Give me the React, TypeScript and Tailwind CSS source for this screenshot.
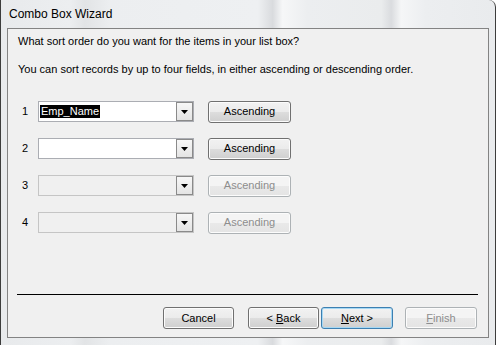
import React from 'react'

const font = { fontFamily: '"Liberation Sans", Arial, sans-serif' }

function Combo({ value, disabled }: { value?: string; disabled?: boolean }) {
  return (
    <div
      className={`w-[156px] h-[21px] flex items-center border ${
        disabled ? 'border-[#c5c5c5] bg-[#f0f0f0]' : 'border-[#abadb3] bg-white'
      }`}
    >
      <div className="flex-1 pl-[1px] flex items-center">
        {value && <span className="bg-black text-white leading-[13px] px-[1px]">{value}</span>}
      </div>
      {/* dropdown arrow button */}
      <div className="w-[17px] h-[19px] border border-[#8a8a8a] bg-[linear-gradient(#f7f7f7,#e4e4e4)] flex items-center justify-center">
        <svg width="7" height="4" viewBox="0 0 7 4">
          <path d="M0 0h7L3.5 4z" fill="#000" />
        </svg>
      </div>
    </div>
  )
}

function WinButton({
  children,
  disabled,
  primary,
  className = '',
}: {
  children: React.ReactNode
  disabled?: boolean
  primary?: boolean
  className?: string
}) {
  const border = disabled ? 'border-[#adb2b5]' : primary ? 'border-[#3c7fb1]' : 'border-[#707070]'
  const bg = disabled
    ? 'bg-[linear-gradient(#f4f4f4,#f4f4f4_50%,#e9e9e9_50%,#e4e4e4)]'
    : 'bg-[linear-gradient(#f2f2f2,#ebebeb_50%,#dddddd_50%,#cfcfcf)]'
  return (
    <div
      className={`h-[22px] rounded-[3px] border ${border} ${bg} flex items-center justify-center text-[11px] ${
        disabled ? 'text-[#8d8d8d]' : 'text-black'
      } ${primary ? 'shadow-[inset_0_0_0_1px_#a6d8f4]' : 'shadow-[inset_0_0_0_1px_#fcfcfc]'} ${className}`}
    >
      {children}
    </div>
  )
}

function SortRow({ n, value, disabled }: { n: number; value?: string; disabled?: boolean }) {
  return (
    <div className="h-[23px] flex items-center">
      <span className="w-[19px] pl-[3px] text-[11px] text-black">{n}</span>
      <Combo value={value} disabled={disabled} />
      <WinButton disabled={disabled} className="ml-[14px] w-[83px]">
        Ascending
      </WinButton>
    </div>
  )
}

export default function App() {
  return (
    <div
      className="w-[496px] h-[345px] overflow-hidden bg-white text-[11px] leading-[13px]"
      style={font}
    >
      {/* window frame (aero glass) */}
      <div className="w-[496px] h-[345px] rounded-tr-[7px] border-l border-r border-[#3c3c3c] bg-[linear-gradient(90deg,#e8eaec_0%,#eceef0_14%,#e2e4e6_17%,#eceef0_22%,#eef0f2_52%,#d9dbde_55%,#f6f7f8_57%,#eceef0_62%,#eaeced_77%,#dadcdf_79%,#f5f6f7_81%,#eceef0_86%,#e9ebed_100%)] flex flex-col pl-[6px] pr-[6px]">
        <div className="h-[28px] flex items-center pl-[2px] text-[12px] text-black">Combo Box Wizard</div>

        {/* client area */}
        <div className="w-[482px] h-[310px] border border-[#838383] bg-[#f0f0f0] flex flex-col">
          <div className="pl-[10px] pt-[6px]">What sort order do you want for the items in your list box?</div>
          <div className="pl-[10px] mt-[15px]">
            You can sort records by up to four fields, in either ascending or descending order.
          </div>

          <div className="mt-[24px] pl-[11px] flex flex-col gap-[14px]">
            <SortRow n={1} value="Emp_Name" />
            <SortRow n={2} />
            <SortRow n={3} disabled />
            <SortRow n={4} disabled />
          </div>

          <div className="mt-[60px] ml-[9px] mr-[10px] h-[1px] bg-black" />

          <div className="mt-[12px] flex items-center justify-end pr-[11px]">
            <WinButton className="w-[71px]">Cancel</WinButton>
            <WinButton className="w-[71px] ml-[14px]">
              &lt; <span className="underline ml-[3px]">B</span>ack
            </WinButton>
            <WinButton primary className="w-[72px] ml-[2px]">
              <span className="underline">N</span>ext &gt;
            </WinButton>
            <WinButton disabled className="w-[72px] ml-[12px]">
              <span className="underline">F</span>inish
            </WinButton>
          </div>
        </div>
      </div>
    </div>
  )
}
